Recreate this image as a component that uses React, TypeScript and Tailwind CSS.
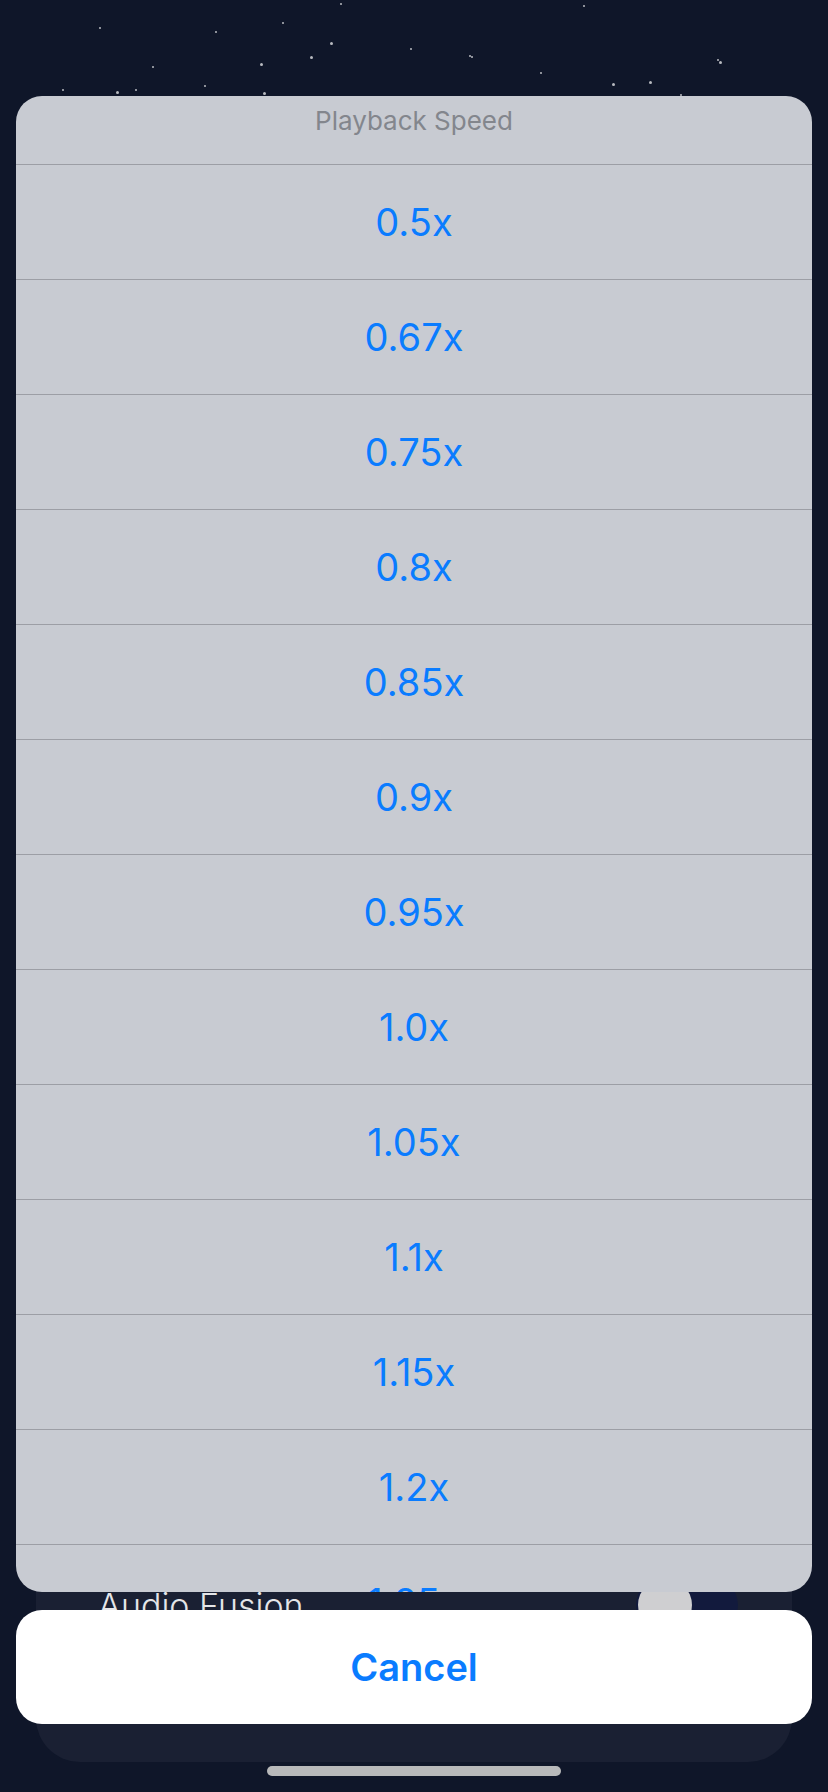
const speeds = ['0.5x', '0.67x', '0.75x', '0.8x', '0.85x', '0.9x', '0.95x', '1.0x', '1.05x', '1.1x', '1.15x', '1.2x', '1.25x', '1.3x'];

// [x, y, size] of the background stars
const stars: [number, number, number][] = [
  [340, 3, 2], [583, 5, 2], [99, 27, 2], [282, 22, 2], [215, 31, 2], [330, 42, 3],
  [310, 56, 3], [260, 63, 3], [471, 56, 2], [719, 61, 3], [152, 66, 2], [204, 85, 2],
  [116, 91, 3], [263, 92, 3], [612, 83, 3], [649, 81, 3], [680, 94, 2], [62, 89, 2],
  [135, 89, 2], [469, 55, 2], [717, 59, 2], [410, 48, 2], [540, 72, 2],
];

export default function App() {
  return (
    <div
      className="relative h-[1792px] w-[828px] overflow-hidden bg-[#0f1629]"
      style={{ fontFamily: 'Inter, "Liberation Sans", sans-serif' }}
    >
      {stars.map(([x, y, s], i) => (
        <div
          key={i}
          className="absolute rounded-full bg-white/70"
          style={{ left: x, top: y, width: s, height: s }}
        />
      ))}

      {/* app content behind the sheet */}
      <div className="flex h-full flex-col justify-end pb-[30px]">
        <div className="mx-[36px] h-[250px] rounded-b-[44px] bg-[#1a2033]">
          <div className="flex items-center justify-between pl-[62px] pr-[54px] pt-[64px]">
            <span className="text-[34px] font-light text-[#e4e5e8]">Audio Fusion</span>
            <div className="flex h-[58px] w-[102px] items-center rounded-full bg-[#121a3d] px-[2px]">
              <div className="h-[54px] w-[54px] rounded-full bg-[#cfcfd1]" />
            </div>
          </div>
        </div>
      </div>

      {/* action sheet */}
      <div className="absolute inset-0 flex flex-col gap-[18px] px-4 pt-[96px]">
        <div className="h-[1496px] overflow-hidden rounded-[26px] bg-[#c8cbd2]">
          <div className="flex h-[68px] justify-center pt-[9px]">
            <span className="text-[26px] leading-[31px] text-[#83868d]">Playback Speed</span>
          </div>
          {speeds.map((s) => (
            <div
              key={s}
              className="flex h-[115px] items-center justify-center border-t border-[#9c9ea5] text-[38px] text-[#0a7cff]"
            >
              {s}
            </div>
          ))}
        </div>
        <div className="flex h-[114px] items-center justify-center rounded-[26px] bg-white text-[38px] font-semibold text-[#0a7cff]">
          Cancel
        </div>
      </div>

      <div className="absolute left-[267px] top-[1766px] h-[10px] w-[294px] rounded-full bg-[#b8b9ba]" />
    </div>
  );
}
